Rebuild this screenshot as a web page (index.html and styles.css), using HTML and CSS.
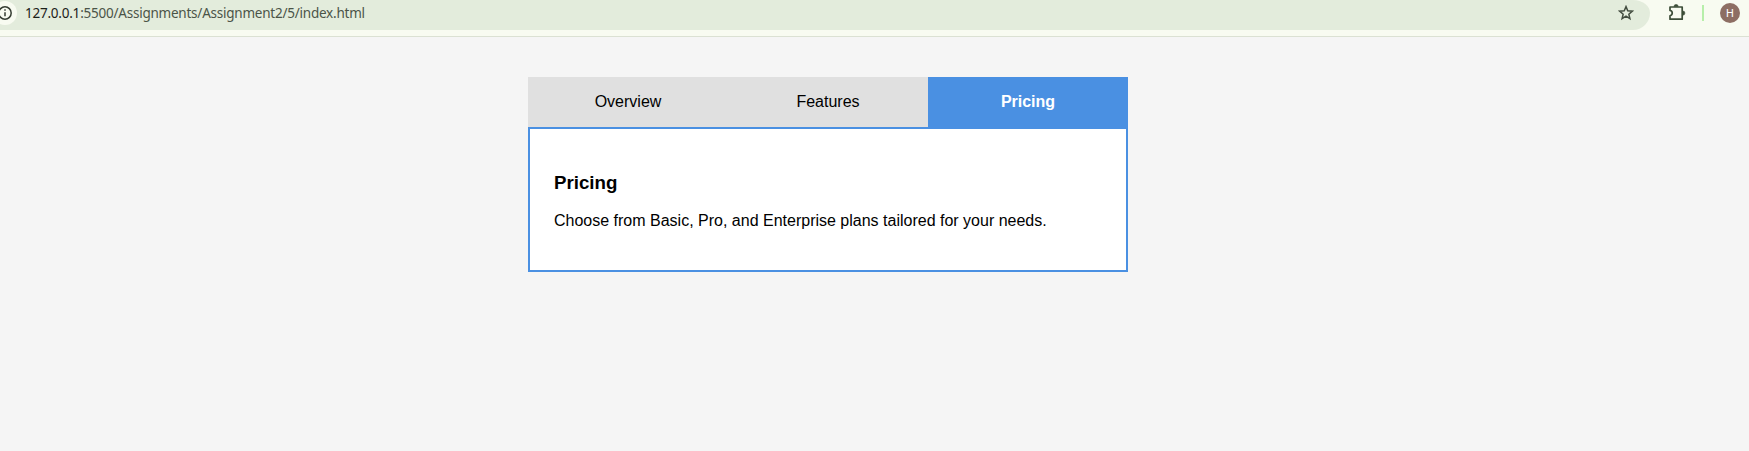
FILE: index.html
```html
<!DOCTYPE html>
<html lang="en">
<head>
<meta charset="utf-8">
<title>Tabs</title>
<link rel="stylesheet" href="styles.css">
</head>
<body>
<header class="toolbar">
  <div class="address-bar">
    <svg class="site-info" width="17" height="26" viewBox="0 0 17 26">
      <circle cx="5" cy="13" r="12" fill="#f8fbf1"/>
      <circle cx="5" cy="13" r="6.2" fill="none" stroke="#353c32" stroke-width="1.5"/>
      <path d="M5 12.2v4M5 9.2v1.6" stroke="#353c32" stroke-width="1.5"/>
    </svg>
    <span class="url"><span class="host">127.0.0.1</span>:5500/Assignments/Assignment2/5/index.html</span>
    <svg class="star" width="16" height="16" viewBox="0 0 16 16">
      <path d="M8 1.6l1.75 4.2 4.55.38-3.45 2.98 1.05 4.44L8 11.2l-3.9 2.4 1.05-4.44L1.7 6.18l4.55-.38z" fill="none" stroke="#434d40" stroke-width="1.5"/>
    </svg>
  </div>
  <svg class="extensions" width="18" height="18" viewBox="0 0 18 18">
    <path d="M2 3h12.2v12.2H2v-3.4c3-.6 3-4.8 0-5.4z" fill="none" stroke="#3c4d38" stroke-width="1.7" stroke-linejoin="round"/>
    <path d="M6 2.5a2 2 0 0 1 4.2 0zM14.8 7a2 2 0 0 1 0 4.2z" fill="#3c4d38" stroke="#3c4d38" stroke-width=".6"/>
  </svg>
  <span class="divider"></span>
  <span class="avatar">H</span>
</header>
<main class="container">
  <nav class="tabs">
    <div class="tab">Overview</div>
    <div class="tab">Features</div>
    <div class="tab active">Pricing</div>
  </nav>
  <section class="content">
    <h3>Pricing</h3>
    <p>Choose from Basic, Pro, and Enterprise plans tailored for your needs.</p>
  </section>
</main>
</body>
</html>
```
FILE: styles.css
```css
* { box-sizing: border-box; }
body {
  margin: 0;
  background: #f5f5f5;
  color: #000;
  font-family: "Liberation Sans", Arial, sans-serif;
  font-size: 16px;
}
.toolbar {
  display: flex;
  align-items: flex-start;
  height: 37px;
  background: #f8fbf1;
  border-bottom: 1px solid #dbe1d3;
}
.address-bar {
  display: flex;
  align-items: center;
  width: 1650px;
  height: 30px;
  padding: 0 16px 4px 0;
  background: #e3ecdc;
  border-radius: 0 0 17px 0 / 0 0 17px 0;
  border-top-right-radius: 17px 13px;
}
.site-info { flex: none; }
.url {
  margin-left: 8px;
  color: #4b5448;
  font: 13.5px/20px "Noto Sans", sans-serif;
  letter-spacing: -0.23px;
  white-space: nowrap;
}
.host { color: #1c211a; }
.star { margin-left: auto; }
.extensions { margin: 4px 0 0 18px; }
.divider {
  width: 2px;
  height: 16px;
  margin: 5px 0 0 16px;
  background: #b7efaa;
}
.avatar {
  width: 20px;
  height: 20px;
  margin: 3px 0 0 16px;
  border-radius: 50%;
  background: #8d6e63;
  color: #fff;
  font: 11px/21px Roboto, sans-serif;
  text-align: center;
}
.container {
  width: 600px;
  margin: 40px 0 0 528px;
}
.tabs { display: flex; }
.tab {
  flex: 1;
  height: 50px;
  padding: 16px;
  background: #e0e0e0;
  line-height: normal;
  text-align: center;
}
.tab.active {
  background: #4a90e2;
  color: #fff;
  font-weight: bold;
}
.content {
  height: 145px;
  padding: 24px;
  border: 2px solid #4a90e2;
  background: #fff;
}
```
